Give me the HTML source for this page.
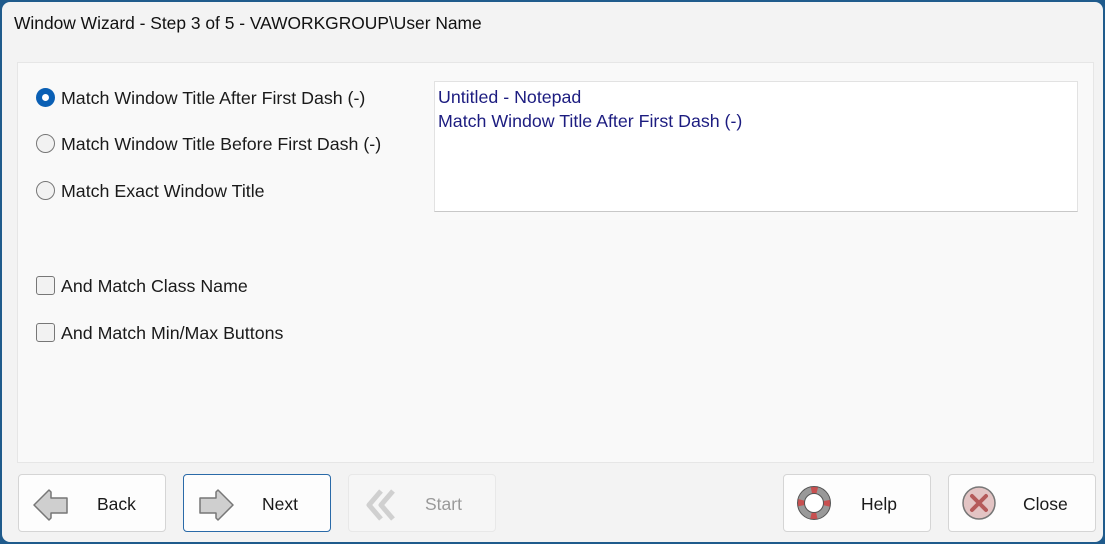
<!DOCTYPE html>
<html><head><meta charset="utf-8"><style>
*{margin:0;padding:0;box-sizing:border-box}
body{width:1105px;height:544px;background:#1f5b8c;font-family:"Liberation Sans",sans-serif;overflow:hidden;position:relative}
.win{position:absolute;left:2px;top:2px;width:1101px;height:540px;background:#f3f3f3;border-radius:8px}
.title{position:absolute;left:12px;top:11px;font-size:17.4px;color:#111}
.panel{position:absolute;left:17px;top:62px;width:1077px;height:401px;background:#f9f9f9;border:1px solid #e6e6e6}
.lbl{position:absolute;font-size:17.8px;color:#1a1a1a;white-space:nowrap}
.radio{position:absolute;width:19px;height:19px;border-radius:50%;border:1px solid #777;background:#f2f2f2}
.radio.on{border:none;background:#0a5fb4}
.radio.on::after{content:"";position:absolute;left:6px;top:6px;width:7px;height:7px;border-radius:50%;background:#fff}
.chk{position:absolute;width:19px;height:19px;border-radius:3px;border:1px solid #777;background:#f2f2f2}
.box{position:absolute;left:434px;top:81px;width:644px;height:131px;background:#fff;border:1px solid #e2e2e2;border-bottom:1px solid #c8c8c8;padding:3px 3px;color:#1c1c80;font-size:17.8px;line-height:24px;white-space:nowrap}
.btn{position:absolute;top:474px;width:148px;height:58px;background:#fdfdfd;border:1px solid #d5d5d5;border-radius:4px;font-size:17.5px;color:#1a1a1a}
.btn span{position:absolute;top:19px}
.btn svg{position:absolute;left:12px;top:10px}
</style></head><body>
<div class="win">
<div class="title">Window Wizard - Step 3 of 5 - VAWORKGROUP\User Name</div>
</div>
<div class="panel"></div>
<div class="radio on" style="left:36px;top:88px"></div>
<div class="lbl" style="left:61px;top:88px">Match Window Title After First Dash (-)</div>
<div class="radio" style="left:36px;top:134px"></div>
<div class="lbl" style="left:61px;top:134px">Match Window Title Before First Dash (-)</div>
<div class="radio" style="left:36px;top:181px"></div>
<div class="lbl" style="left:61px;top:181px">Match Exact Window Title</div>
<div class="chk" style="left:36px;top:276px"></div>
<div class="lbl" style="left:61px;top:276px">And Match Class Name</div>
<div class="chk" style="left:36px;top:323px"></div>
<div class="lbl" style="left:61px;top:323px">And Match Min/Max Buttons</div>
<div class="box">Untitled - Notepad<br>Match Window Title After First Dash (-)</div>

<div class="btn" style="left:18px"><svg width="40" height="40" viewBox="0 0 40 40"><path d="M3 20 L18 5 L20 7 L20 13 L36 13 L36 28 L20 28 L20 33 L18 35 Z" fill="#cfcfcf" stroke="#777" stroke-width="1.5" stroke-linejoin="round"/></svg><span style="left:78px">Back</span></div>
<div class="btn" style="left:183px;border-color:#2a6aa8"><svg width="40" height="40" viewBox="0 0 40 40"><path d="M37 20 L22 5 L20 7 L20 13 L4 13 L4 28 L20 28 L20 33 L22 35 Z" fill="#cfcfcf" stroke="#777" stroke-width="1.5" stroke-linejoin="round"/></svg><span style="left:78px">Next</span></div>
<div class="btn" style="left:348px;background:#f6f6f6;border-color:#e8e8e8;color:#999"><svg width="40" height="40" viewBox="0 0 40 40"><path d="M20 6 L8 20 L20 34 M32 6 L20 20 L32 34" fill="none" stroke="#d0d0d0" stroke-width="5" stroke-linejoin="round"/></svg><span style="left:76px">Start</span></div>
<div class="btn" style="left:783px"><svg width="40" height="40" viewBox="0 0 40 40"><circle cx="18" cy="18" r="13" fill="none" stroke="#999" stroke-width="7"/><circle cx="18" cy="18" r="13" fill="none" stroke="#c85050" stroke-width="7" stroke-dasharray="6 14.4" stroke-dashoffset="3"/><circle cx="18" cy="18" r="16.5" fill="none" stroke="#555" stroke-width="1"/><circle cx="18" cy="18" r="9.5" fill="#fff" stroke="#555" stroke-width="1"/></svg><span style="left:77px">Help</span></div>
<div class="btn" style="left:948px"><svg width="40" height="40" viewBox="0 0 40 40"><circle cx="18" cy="18" r="16" fill="#e3c4c4" stroke="#777" stroke-width="1.5"/><path d="M11 11 L25 25 M25 11 L11 25" stroke="#b55a5a" stroke-width="4" stroke-linecap="round"/></svg><span style="left:74px">Close</span></div>
</body></html>
